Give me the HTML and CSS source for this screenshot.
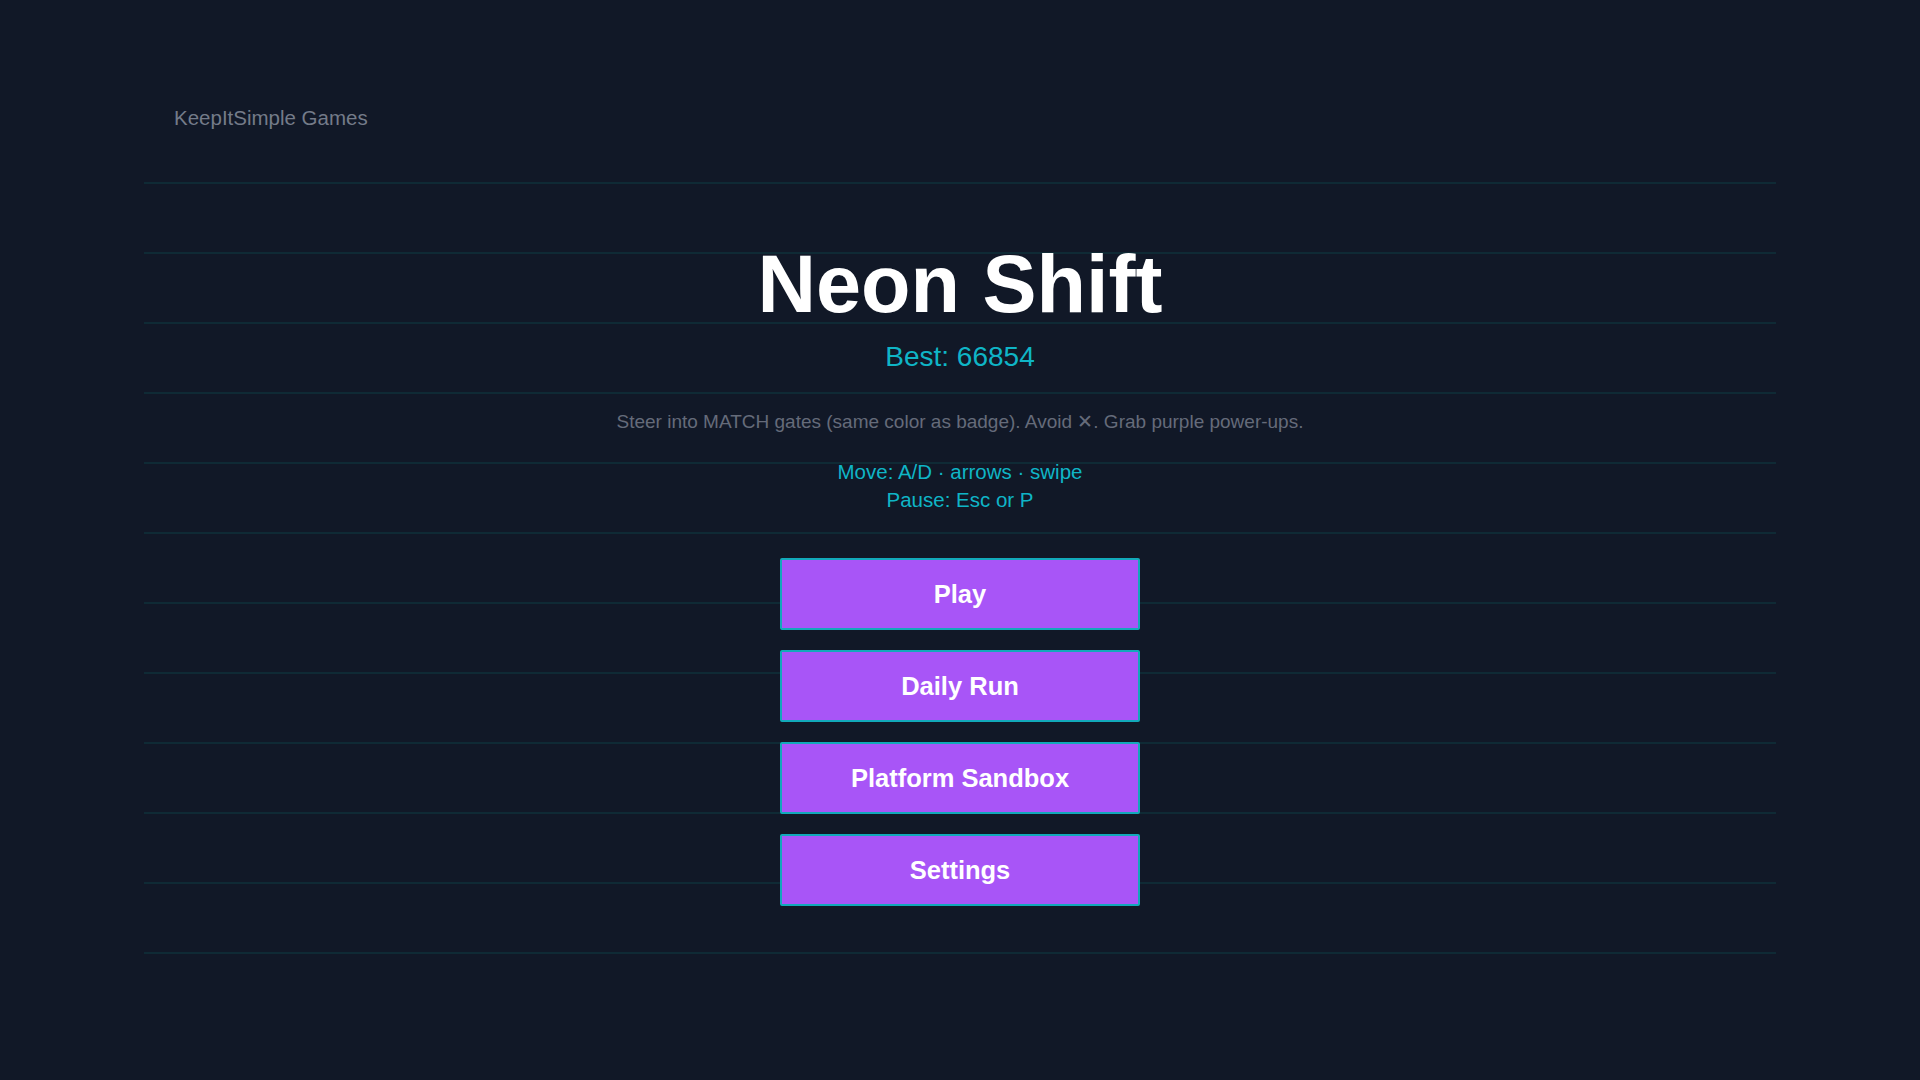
FILE: index.html
```html
<!DOCTYPE html>
<html lang="en">
<head>
  <meta charset="UTF-8" />
  <meta name="viewport" content="width=device-width, initial-scale=1.0"/>
  <title>Neon Shift</title>
  <link rel="stylesheet" href="styles.css">
</head>
<body>

  <!-- Studio name -->
  <header class="brand-bar">
    <span class="brand">KeepItSimple Games</span>
  </header>

  <!-- Main menu over the lane grid -->
  <main class="stage">
    <h1 class="title">Neon Shift</h1>
    <div class="best">Best: <span id="bestScore">66854</span></div>
    <p class="hint">Steer into MATCH gates (same color as badge). Avoid ✕. Grab purple power-ups.</p>
    <div class="controls">
      <div>Move: A/D · arrows · swipe</div>
      <div>Pause: Esc or P</div>
    </div>

    <nav class="menu">
      <button class="menu-btn">Play</button>
      <button class="menu-btn">Daily Run</button>
      <button class="menu-btn">Platform Sandbox</button>
      <button class="menu-btn">Settings</button>
    </nav>
  </main>

</body>
</html>
```

FILE: styles.css
```css
body {
  margin: 0;
  background-color: #111827;
  font-family: 'Liberation Sans', Arial, sans-serif;
  color: #fff;
}

.brand-bar {
  padding: 108px 0 0 174px;
}

.brand {
  display: block;
  font-size: 20.5px;
  line-height: 20px;
  color: #747b89;
}

/* lane lines every 70px */
.stage {
  margin: 54px 144px 0;
  padding: 62px 0 50px;
  display: flex;
  flex-direction: column;
  align-items: center;
  background-image: repeating-linear-gradient(
    to bottom,
    #0f2a35 0px,
    #0f2a35 2px,
    transparent 2px,
    transparent 70px
  );
}

.title {
  margin: 0;
  font-size: 81px;
  line-height: 80px;
  font-weight: bold;
  color: #fff;
}

.best {
  margin-top: 19px;
  font-size: 28px;
  line-height: 28px;
  color: #0fb5c6;
}

.hint {
  margin: 42px 0 0;
  font-size: 19px;
  line-height: 18px;
  color: #656b7a;
}

.controls {
  margin-top: 27px;
  font-size: 20.5px;
  line-height: 28px;
  text-align: center;
  color: #0fb5c6;
}

.menu {
  margin-top: 44px;
  display: flex;
  flex-direction: column;
  gap: 20px;
}

.menu-btn {
  width: 360px;
  height: 72px;
  padding: 0;
  background-color: #a855f7;
  border: 2px solid #12a9ba;
  border-radius: 2px;
  color: #fff;
  font-family: inherit;
  font-size: 25.5px;
  font-weight: bold;
  cursor: pointer;
}
.menu-btn:hover {
  background-color: #9333ea;
}
```
